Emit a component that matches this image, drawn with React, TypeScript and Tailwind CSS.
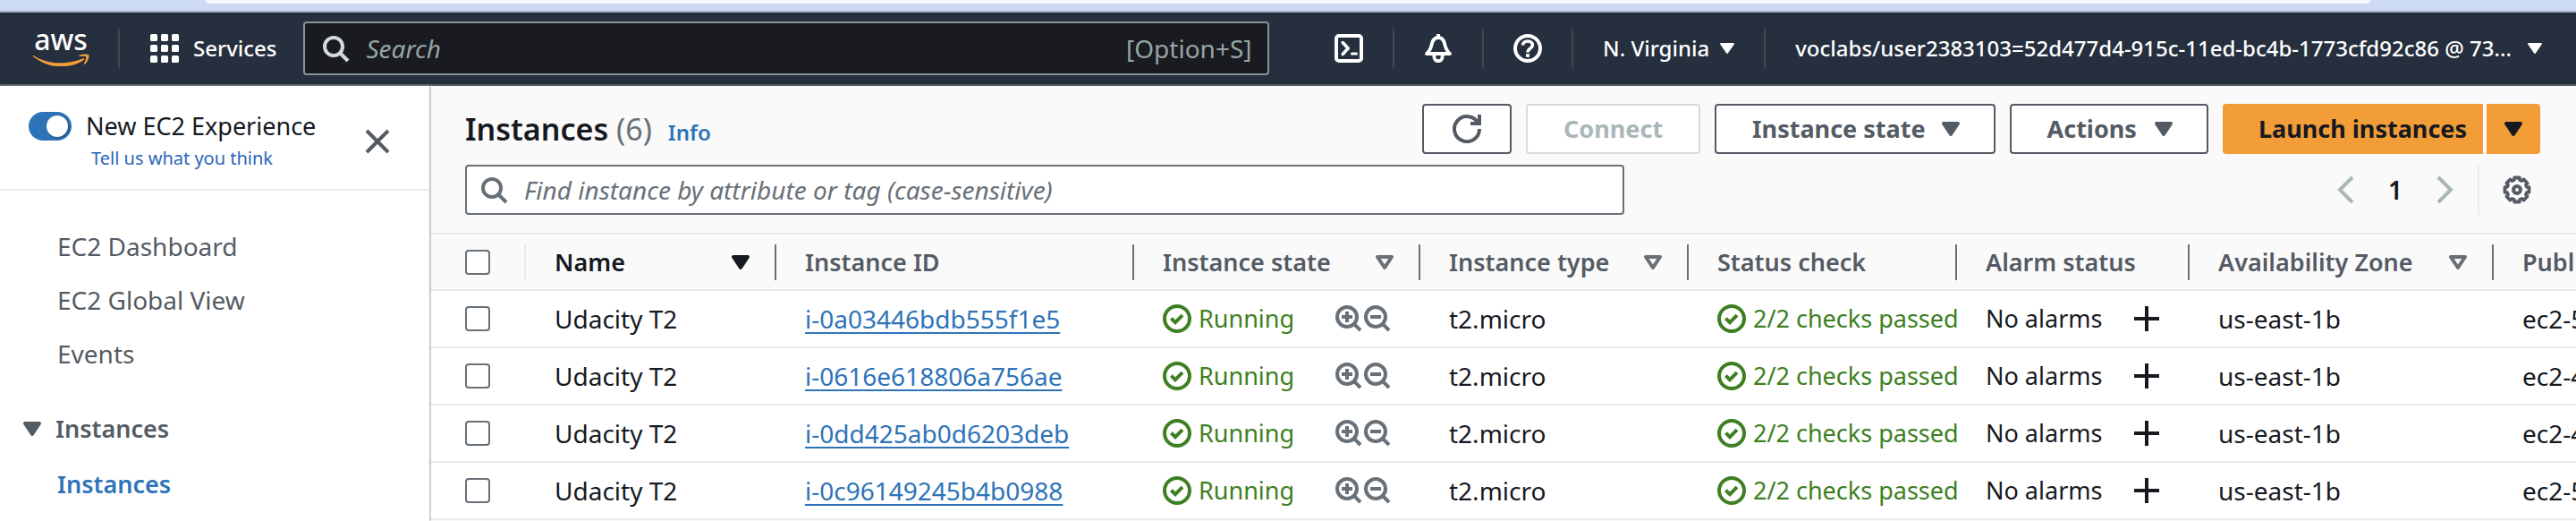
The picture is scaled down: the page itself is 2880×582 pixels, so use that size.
import type { ReactNode } from 'react';

type IconProps = { className?: string };

function Icon({ className = 'size-8', children }: IconProps & { children: ReactNode }) {
  return (
    <svg
      viewBox="0 0 16 16"
      className={`shrink-0 ${className}`}
      fill="none"
      stroke="currentColor"
      strokeWidth="2"
      aria-hidden="true"
    >
      {children}
    </svg>
  );
}

const SearchIcon = ({ className }: IconProps) => (
  <Icon className={className}>
    <circle cx="7" cy="7" r="5" />
    <path d="m15 15-4.5-4.5" />
  </Icon>
);

const CaretFilled = ({ className }: IconProps) => (
  <Icon className={className}>
    <path d="M4 5h8l-4 6-4-6z" fill="currentColor" strokeLinejoin="round" />
  </Icon>
);

const CaretOutline = ({ className }: IconProps) => (
  <Icon className={className}>
    <path d="M4 5h8l-4 6-4-6z" strokeLinejoin="round" />
  </Icon>
);

const CheckCircle = () => (
  <Icon>
    <circle cx="8" cy="8" r="7" />
    <path d="m4.7 7.8 2.3 2.3 4-4" />
  </Icon>
);

const NavCaret = () => (
  <svg viewBox="0 0 16 12" className="h-3 w-4 shrink-0" fill="currentColor" aria-hidden="true">
    <path d="M1 0h14c.9 0 1.2.7.8 1.4L9 11.3c-.5.8-1.5.8-2 0L.2 1.4C-.2.7.1 0 1 0z" />
  </svg>
);

function gearPath() {
  const points: string[] = [];
  for (let i = 0; i < 8; i++) {
    const mid = i * 45;
    for (const [offset, radius] of [[-12, 6.9], [12, 6.9], [16, 5.7], [29, 5.7]]) {
      const a = ((mid + offset - 90) * Math.PI) / 180;
      points.push(`${(8 + radius * Math.cos(a)).toFixed(2)} ${(8 + radius * Math.sin(a)).toFixed(2)}`);
    }
  }
  return `M${points.join('L')}Z`;
}

const Gear = () => (
  <Icon className="block size-8">
    <path d={gearPath()} strokeLinejoin="round" strokeWidth="1.9" />
    <circle cx="8" cy="8" r="2" />
  </Icon>
);

const NavDivider = () => <span className="h-11 w-0.5 shrink-0 bg-[#414750]" />;

function AwsLogo() {
  return (
    <a href="#home" className="flex w-16 shrink-0 flex-col items-center pb-0.5" aria-label="aws">
      <span className="text-[32px]/6 font-medium">aws</span>
      <svg viewBox="0 0 192 44" className="mt-1 w-16 text-[#f29d38]" fill="currentColor" aria-hidden="true">
        <path d="M3 5C30 22 60 32 97 31c28 0 53-7 73-15 4-1 7 2 3 5-20 15-50 22-76 22C60 43 28 29 2 8z" />
        <path d="M157 6c11-6 27-5 32-3 4 5-1 23-12 32-2 1-4 0-3-3 4-8 8-19 6-22-4-3-14-2-22-1z" />
      </svg>
    </a>
  );
}

function TopNav() {
  return (
    <header className="flex items-center border-b-2 border-[#545b64] bg-[#252f3e] pr-[38px] pl-9 text-white">
      <AwsLogo />
      <span className="w-8 shrink-0" />
      <NavDivider />
      <button className="ml-[34px] flex shrink-0 items-center gap-4 text-2xl font-medium">
        <svg viewBox="0 0 16 16" className="size-8" fill="currentColor" aria-hidden="true">
          {[0, 6, 12].map((y) =>
            [0, 6, 12].map((x) => <rect key={`${x}-${y}`} x={x} y={y} width="4" height="4" rx=".8" />),
          )}
        </svg>
        Services
      </button>
      <label className="my-2.5 ml-[30px] flex h-[60px] max-w-[1080px] flex-1 items-center rounded-sm border-2 border-[#879596] bg-[#191b20] px-[18px]">
        <SearchIcon className="size-8 text-[#d5dbdb]" />
        <input
          type="search"
          placeholder="Search"
          aria-label="Search"
          className="ml-[18px] min-w-0 flex-1 bg-transparent text-[28px]/9 outline-none placeholder:text-[#95a5a6] placeholder:italic"
        />
        <span className="text-[28px]/9 text-[#95a5a6]">[Option+S]</span>
      </label>
      <div className="ml-auto flex items-center gap-[33px]">
        <button aria-label="CloudShell">
          <Icon className="block size-8">
            <rect x="1" y="1" width="14" height="14" rx="1.5" />
            <path d="M4.6 4.8 7.6 8l-3 3.2" strokeWidth="1.8" strokeLinecap="round" strokeLinejoin="round" />
            <path d="M9.8 11h2.4" strokeLinecap="round" strokeWidth="1.6" />
          </Icon>
        </button>
        <NavDivider />
        <button aria-label="Notifications">
          <Icon className="block size-8">
            <path d="M8 0v2" />
            <path
              d="M1.5 11C3.7 9 4 7.5 4.4 5.6 4.9 3.2 6.2 2 8 2s3.1 1.2 3.6 3.6c.4 1.9.7 3.4 2.9 5.4z"
              strokeLinejoin="round"
              strokeWidth="1.9"
            />
            <path d="M5.7 11.5v1.3a2.3 2.3 0 0 0 4.6 0v-1.3" strokeWidth="1.9" />
          </Icon>
        </button>
        <NavDivider />
        <button aria-label="Help">
          <Icon className="block size-8">
            <circle cx="8" cy="8" r="7" />
            <path d="M5.3 6.2C5.3 4.8 6.5 4 8 4s2.7.8 2.7 2.2c0 1.9-2.7 1.9-2.7 4" strokeWidth="1.8" />
            <path d="M7 12h2" strokeWidth="1.8" />
          </Icon>
        </button>
        <NavDivider />
        <button className="flex items-center gap-3 text-2xl font-medium whitespace-nowrap">
          N. Virginia
          <NavCaret />
        </button>
        <NavDivider />
        <button className="flex items-center gap-[18px] text-2xl font-medium whitespace-nowrap">
          voclabs/user2383103=52d477d4-915c-11ed-bc4b-1773cfd92c86 @ 73...
          <NavCaret />
        </button>
      </div>
    </header>
  );
}

function SideNav() {
  return (
    <nav className="z-10 w-[480px] shrink-0 bg-white text-[28px]/9 text-[#545b64] shadow-[1px_0_2px_#9aa5a5]">
      <div className="flex items-center justify-between border-b-2 border-[#eaeaea] pt-[27px] pr-[42px] pb-[18px] pl-8">
        <div>
          <label className="flex items-center gap-4 text-[27px]/9 text-[#16191f]">
            <input type="checkbox" role="switch" defaultChecked className="peer sr-only" />
            <span className="flex h-8 w-12 justify-end rounded-full bg-[#2e73b8] p-1">
              <span className="size-6 rounded-full bg-white shadow-[1px_1px_2px_#0006]" />
            </span>
            New EC2 Experience
          </label>
          <a href="#feedback" className="mt-0.5 ml-[70px] block text-xl/8 text-[#2b66b8]">
            Tell us what you think
          </a>
        </div>
        <button aria-label="Close navigation">
          <Icon className="block size-8">
            <path d="m2 2 12 12M14 2 2 14" />
          </Icon>
        </button>
      </div>
      <ul className="mt-11 flex flex-col gap-6 pl-16">
        {['EC2 Dashboard', 'EC2 Global View', 'Events'].map((item) => (
          <li key={item}>
            <a href="#nav">{item}</a>
          </li>
        ))}
      </ul>
      <button className="mt-12 flex items-center gap-2.5 pl-5 text-[27px]/9 font-semibold">
        <CaretFilled />
        Instances
      </button>
      <a href="#instances" className="mt-[26px] block pl-16 text-[27px]/9 font-semibold text-[#2e73b8]">
        Instances
      </a>
    </nav>
  );
}

const buttonBase = 'flex h-14 items-center rounded-sm border-2 bg-white text-[27px]/9 font-bold whitespace-nowrap';

function Toolbar() {
  return (
    <div className="px-10 pt-5 pb-5">
      <div className="flex items-center justify-between">
        <div className="flex items-baseline">
          <h1 className="text-[34px]/10 font-semibold text-[#16191f]">
            Instances <span className="font-normal text-[#687078]">(6)</span>
          </h1>
          <a href="#info" className="ml-[18px] text-2xl font-semibold text-[#2e73b8]">
            Info
          </a>
        </div>
        <div className="flex gap-4 text-[#545b64]">
          <button className={`${buttonBase} border-[#545b64] px-8`} aria-label="Refresh">
            <Icon>
              <path d="M10 5h5V0" />
              <path d="M15 8a7 7 0 1 1-.7-3" />
            </Icon>
          </button>
          <button disabled className={`${buttonBase} border-[#d5dbdb] px-10 text-[#aab7b8]`}>
            Connect
          </button>
          <button className={`${buttonBase} gap-3 border-[#545b64] pr-8 pl-10`}>
            Instance state
            <CaretFilled />
          </button>
          <button className={`${buttonBase} gap-3.5 border-[#545b64] pr-8 pl-10`}>
            Actions
            <CaretFilled />
          </button>
          <div className="flex gap-1 text-[#16191f]">
            <button className="h-14 rounded-l-sm bg-[#f29d38] pr-[18px] pl-10 text-[27px]/9 font-bold whitespace-nowrap">
              Launch instances
            </button>
            <button className="h-14 rounded-r-sm bg-[#f29d38] px-3.5" aria-label="More launch options">
              <CaretFilled className="block size-8" />
            </button>
          </div>
        </div>
      </div>
      <div className="mt-3 flex items-center justify-between">
        <label className="flex h-14 w-[1296px] items-center rounded-sm border-2 border-[#687078] bg-white px-3.5">
          <SearchIcon className="size-8 text-[#687078]" />
          <input
            type="search"
            placeholder="Find instance by attribute or tag (case-sensitive)"
            aria-label="Find instance"
            className="ml-[18px] min-w-0 flex-1 bg-transparent text-[28px]/9 outline-none placeholder:text-[#687078] placeholder:italic"
          />
        </label>
        <div className="flex items-center">
          <button disabled aria-label="Previous page" className="text-[#aab7b8]">
            <Icon className="block size-8">
              <path d="M12 1 5 8l7 7" />
            </Icon>
          </button>
          <span className="w-20 text-center text-[28px]/9 font-semibold text-[#16191f]">1</span>
          <button disabled aria-label="Next page" className="text-[#aab7b8]">
            <Icon className="block size-8">
              <path d="m4 1 7 7-7 7" />
            </Icon>
          </button>
          <span className="ml-5 h-14 w-0.5 bg-[#eaeaea]" />
          <button aria-label="Preferences" className="mr-2.5 ml-[26px] text-[#545b64]">
            <Gear />
          </button>
        </div>
      </div>
    </div>
  );
}

type Column = { label: string; width: string; caret?: 'sorted' | 'sortable' };

const columns: Column[] = [
  { label: 'Name', width: 'w-[280px]', caret: 'sorted' },
  { label: 'Instance ID', width: 'w-[400px]' },
  { label: 'Instance state', width: 'w-[320px]', caret: 'sortable' },
  { label: 'Instance type', width: 'w-[300px]', caret: 'sortable' },
  { label: 'Status check', width: 'w-[300px]' },
  { label: 'Alarm status', width: 'w-[260px]' },
  { label: 'Availability Zone', width: 'w-[340px]', caret: 'sortable' },
  { label: 'Publ', width: 'w-auto' },
];

const instances = [
  { id: 'i-0a03446bdb555f1e5', dns: 'ec2-5' },
  { id: 'i-0616e618806a756ae', dns: 'ec2-4' },
  { id: 'i-0dd425ab0d6203deb', dns: 'ec2-4' },
  { id: 'i-0c96149245b4b0988', dns: 'ec2-5' },
];

const Checkbox = ({ label }: { label: string }) => (
  <input
    type="checkbox"
    aria-label={label}
    className="block size-7 appearance-none rounded-sm border-2 border-[#687078] bg-white checked:bg-[#2e73b8]"
  />
);

function InstanceTable() {
  return (
    <table className="w-full table-fixed border-collapse text-left text-[28px]/9 whitespace-nowrap text-[#16191f]">
      <thead>
        <tr className="h-[63px] border-y-2 border-[#eaeaea] text-[27px]/9 text-[#545b64]">
          <th className="w-[108px] p-0">
            <div className="flex h-10 items-center border-r-2 border-[#eaeaea] pl-10">
              <Checkbox label="Select all instances" />
            </div>
          </th>
          {columns.map(({ label, width, caret }, i) => (
            <th key={label} className={`${width} overflow-hidden p-0 font-semibold`}>
              <div
                className={`flex h-10 items-center justify-between pl-8 ${
                  i < columns.length - 1 ? 'border-r-2 border-[#687078] pr-[22px]' : ''
                } ${caret === 'sorted' ? 'text-[#16191f]' : ''}`}
              >
                {label}
                {caret === 'sorted' && <CaretFilled />}
                {caret === 'sortable' && <CaretOutline className="size-8 text-[#687078]" />}
              </div>
            </th>
          ))}
        </tr>
      </thead>
      <tbody>
        {instances.map(({ id, dns }) => (
          <tr key={id} className="h-16 border-b-2 border-[#eaeaea] bg-white">
            <td className="p-0 pl-10">
              <Checkbox label={`Select ${id}`} />
            </td>
            <td className="p-0 pl-8">Udacity T2</td>
            <td className="p-0 pl-8">
              <a href={`#${id}`} className="text-[#2e73b8] underline decoration-2 underline-offset-4">
                {id}
              </a>
            </td>
            <td className="p-0 px-8">
              <div className="flex items-center">
                <span className="flex items-center gap-2 text-[27px]/9 text-[#3d7f21]">
                  <CheckCircle />
                  Running
                </span>
                <span className="ml-auto flex text-[#687078]">
                  <button aria-label="Filter to this state">
                    <Icon className="block size-8">
                      <circle cx="7" cy="7" r="5.5" />
                      <path d="m10.8 10.8 3.7 3.7M7 4v6M4 7h6" />
                    </Icon>
                  </button>
                  <button aria-label="Exclude this state">
                    <Icon className="block size-8">
                      <circle cx="7" cy="7" r="5.5" />
                      <path d="m10.8 10.8 3.7 3.7M4 7h6" />
                    </Icon>
                  </button>
                </span>
              </div>
            </td>
            <td className="p-0 pl-8">t2.micro</td>
            <td className="overflow-hidden p-0 pl-8">
              <span className="flex items-center gap-2 text-[27px]/9 text-[#3d7f21]">
                <CheckCircle />
                2/2 checks passed
              </span>
            </td>
            <td className="p-0 px-8">
              <div className="flex items-center justify-between text-[27px]/9">
                No alarms
                <button aria-label="Add alarm">
                  <Icon className="block size-8">
                    <path d="M8 1v14M1 8h14" />
                  </Icon>
                </button>
              </div>
            </td>
            <td className="p-0 pl-8">us-east-1b</td>
            <td className="overflow-hidden p-0 pl-8">{dns}</td>
          </tr>
        ))}
      </tbody>
    </table>
  );
}

export default function App() {
  return (
    <div className="flex min-h-screen flex-col bg-[#fafafa] font-['Noto_Sans',sans-serif]">
      <div className="border-b-2 border-[#a4b0c9] bg-[#cddaf4] px-[230px] pb-2">
        <div className="h-1 rounded-b-lg bg-[#f4f8fe]" />
      </div>
      <TopNav />
      <div className="flex flex-1">
        <SideNav />
        <main className="min-w-0 flex-1 overflow-hidden">
          <Toolbar />
          <InstanceTable />
        </main>
      </div>
    </div>
  );
}
